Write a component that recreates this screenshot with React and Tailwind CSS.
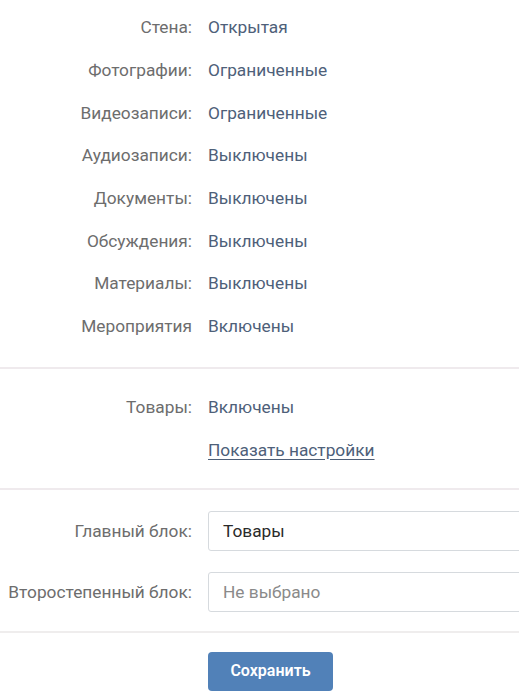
import React from "react";

const rows1 = [
  ["Стена:", "Открытая"],
  ["Фотографии:", "Ограниченные"],
  ["Видеозаписи:", "Ограниченные"],
  ["Аудиозаписи:", "Выключены"],
  ["Документы:", "Выключены"],
  ["Обсуждения:", "Выключены"],
  ["Материалы:", "Выключены"],
  ["Мероприятия", "Включены"],
];

function Row({ label, children }) {
  return (
    <div className="flex items-center h-[42.7px]">
      <div className="w-[192px] shrink-0 text-right text-[#6d6d6d]">{label}</div>
      <div className="ml-[16px] text-[#4e6079]">{children}</div>
    </div>
  );
}

export default function App() {
  return (
    <div
      className="w-[519px] h-[698px] bg-white overflow-hidden text-[17.3px] leading-[22px]"
      style={{ fontFamily: "Roboto, 'Liberation Sans', sans-serif" }}
    >
      <div className="pt-[6px] pb-[19px] border-b-2 border-[#efeaed]">
        {rows1.map(([l, v]) => (
          <Row key={l} label={l}>{v}</Row>
        ))}
      </div>
      <div className="pt-[17px] pb-[17px] border-b-2 border-[#efeaed]">
        <Row label="Товары:">Включены</Row>
        <Row label="">
          <span className="underline underline-offset-[3px]">Показать настройки</span>
        </Row>
      </div>
      <div className="pt-[21px] pb-[19px] border-b-2 border-[#efeded] flex flex-col gap-[21px]">
        <div className="flex items-center">
          <div className="w-[192px] shrink-0 text-right text-[#6d6d6d]">Главный блок:</div>
          <div className="ml-[16px] flex-1 h-[40px] border border-[#d6dade] rounded-[3px] -mr-[10px] flex items-center pl-[14px] text-[#2a2a2a]">
            Товары
          </div>
        </div>
        <div className="flex items-center">
          <div className="w-[192px] shrink-0 text-right text-[#6d6d6d]">Второстепенный блок:</div>
          <div className="ml-[16px] flex-1 h-[40px] border border-[#d6dade] rounded-[3px] -mr-[10px] flex items-center pl-[14px] text-[#8a8a8a]">
            Не выбрано
          </div>
        </div>
      </div>
      <div className="pt-[19px] pl-[208px]">
        <button className="w-[125px] h-[39px] rounded-[4px] bg-[#5181b8] text-white font-semibold text-[16px]">
          Сохранить
        </button>
      </div>
    </div>
  );
}
